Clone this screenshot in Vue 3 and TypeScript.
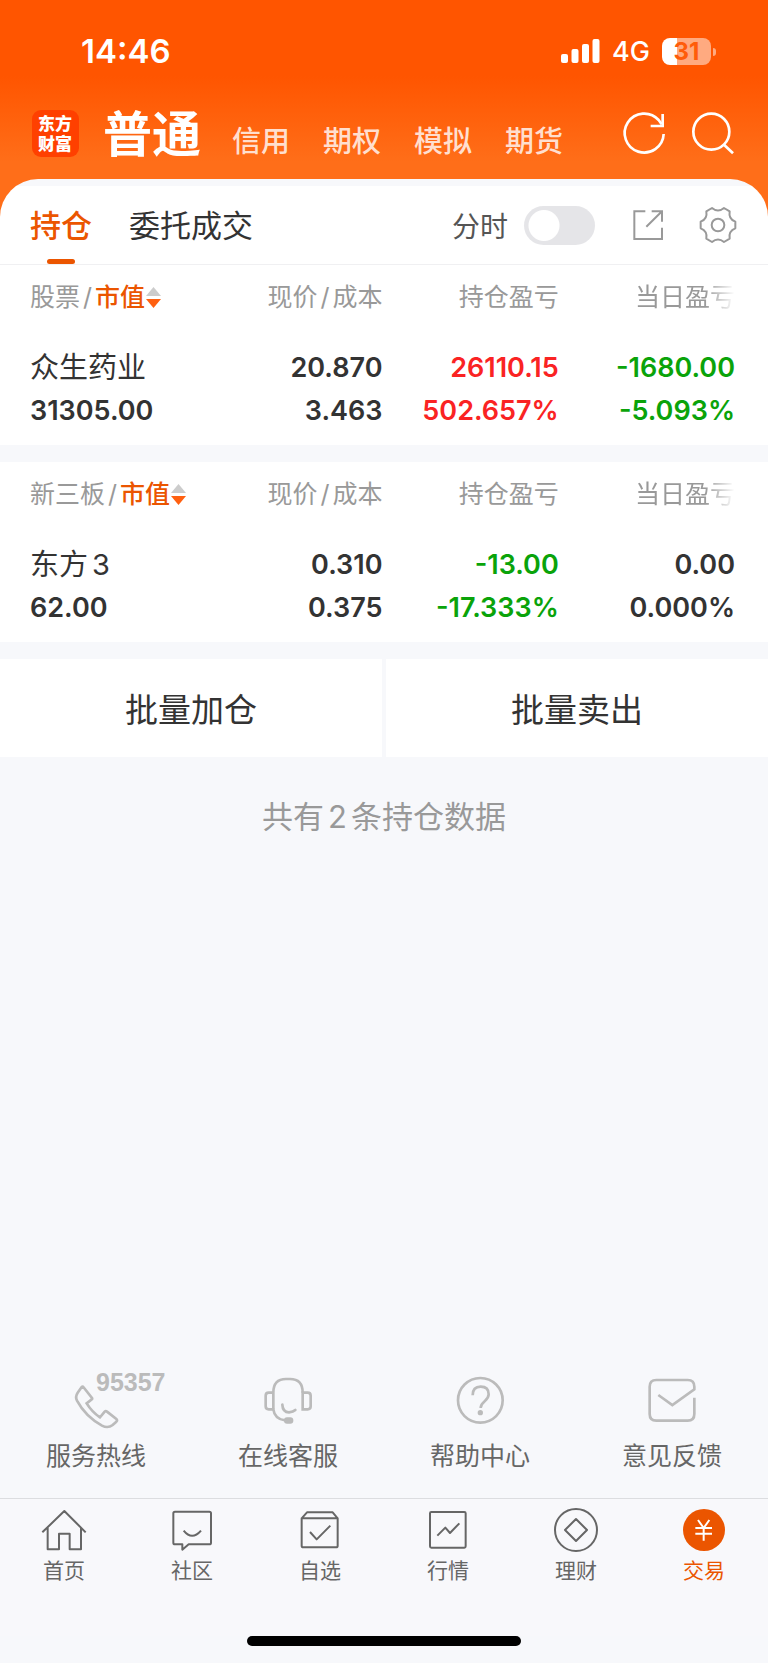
<script setup lang="ts">
import { ref } from 'vue'

type Tone = 'up' | 'down' | 'flat'

interface Cell {
  top: string
  bottom: string
  tone: Tone
}

interface Holding {
  name: string
  digit?: string
  value: string
  cells: Cell[]
}

interface Board {
  title: string
  holdings: Holding[]
}

const accounts = ['信用', '期权', '模拟', '期货']
const intraday = ref(false)

const boards: Board[] = [
  {
    title: '股票',
    holdings: [
      {
        name: '众生药业',
        value: '31305.00',
        cells: [
          { top: '20.870', bottom: '3.463', tone: 'flat' },
          { top: '26110.15', bottom: '502.657%', tone: 'up' },
          { top: '-1680.00', bottom: '-5.093%', tone: 'down' },
        ],
      },
    ],
  },
  {
    title: '新三板',
    holdings: [
      {
        name: '东方',
        digit: '3',
        value: '62.00',
        cells: [
          { top: '0.310', bottom: '0.375', tone: 'flat' },
          { top: '-13.00', bottom: '-17.333%', tone: 'down' },
          { top: '0.00', bottom: '0.000%', tone: 'flat' },
        ],
      },
    ],
  },
]
</script>

<template>
  <div class="page">
    <header class="top">
      <div class="status">
        <span class="time">14:46</span>
        <div class="status-right">
          <svg class="signal" viewBox="0 0 39 24" aria-hidden="true">
            <rect x="0" y="15" width="7" height="9" rx="2" />
            <rect x="10.5" y="10" width="7" height="14" rx="2" />
            <rect x="21" y="5" width="7" height="19" rx="2" />
            <rect x="31.5" y="0" width="7" height="24" rx="2" />
          </svg>
          <span class="network">4G</span>
          <div class="battery"><span>31</span></div>
        </div>
      </div>
      <nav class="accounts">
        <a class="logo" href="#home">东方财富</a>
        <a class="account current" href="#normal">普通</a>
        <a v-for="a in accounts" :key="a" class="account" href="#account">{{ a }}</a>
        <button class="icon-button refresh" type="button" aria-label="刷新">
          <svg viewBox="0 0 144 144" stroke-width="8">
            <path d="M131 75A58.500 58.500 0 1 1 116 33L125 46" />
            <path d="M128 15V51H92" />
          </svg>
        </button>
        <button class="icon-button" type="button" aria-label="搜索">
          <svg viewBox="0 0 144 144" stroke-width="8">
            <circle cx="67" cy="68" r="54" />
            <path d="M105 107L132 133" />
          </svg>
        </button>
      </nav>
    </header>

    <main class="sheet">
      <div class="toolbar">
        <button class="tab active" type="button">持仓</button>
        <button class="tab" type="button">委托成交</button>
        <label class="intraday">
          <span>分时</span>
          <input v-model="intraday" type="checkbox" role="switch" />
        </label>
        <button class="icon-button tool" type="button" aria-label="分享">
          <svg viewBox="0 0 144 144" stroke-width="6">
            <path d="M64 31H31V114H114V80M83 31H114V62M114 31L67 77" />
          </svg>
        </button>
        <button class="icon-button tool" type="button" aria-label="设置">
          <svg viewBox="0 0 144 144" stroke-width="6" stroke-linejoin="round">
            <path
              d="M124 62V82Q103 90 107 113L90 123Q72 108 54 123L37 113Q41 90 20 82V62Q41 54 37 31L54 21Q72 36 90 21L107 31Q103 54 124 62Z"
            />
            <circle cx="72" cy="72" r="19" />
          </svg>
        </button>
      </div>

      <section v-for="b in boards" :key="b.title" class="board">
        <table>
          <thead>
            <tr>
              <th scope="col">
                <button class="sort" type="button">
                  {{ b.title }}<i>/</i><b>市值</b>
                  <svg viewBox="0 0 15 21" aria-hidden="true">
                    <path d="M7.500 0L15 9H0Z" fill="#ccc" />
                    <path d="M7.500 21L15 12H0Z" fill="#ff6010" />
                  </svg>
                </button>
              </th>
              <th scope="col">现价<i>/</i>成本</th>
              <th scope="col">持仓盈亏</th>
              <th scope="col"><span class="fade">当日盈亏</span></th>
            </tr>
          </thead>
          <tbody>
            <tr v-for="h in b.holdings" :key="h.name">
              <td>
                <span class="name">{{ h.name }}<em v-if="h.digit">{{ h.digit }}</em></span>
                <span class="num">{{ h.value }}</span>
              </td>
              <td v-for="(c, i) in h.cells" :key="i" :class="c.tone">
                <span class="num">{{ c.top }}</span>
                <span class="num">{{ c.bottom }}</span>
              </td>
            </tr>
          </tbody>
        </table>
      </section>

      <div class="batch">
        <button type="button">批量加仓</button>
        <button type="button">批量卖出</button>
      </div>

      <p class="summary">共有<span>2</span>条持仓数据</p>
    </main>

    <nav class="services">
      <a href="#hotline">
        <span class="service-icon">
          <svg viewBox="0 0 144 144">
            <path
              d="M34 33L60 66Q62 69 58 71L44 82Q60 108 84 124L98 107Q101 104 105 107L133 129Q137 133 133 137L122 147Q108 158 90 149Q40 121 15 74Q9 62 17 50L29 33Q32 30 34 33Z"
            />
          </svg>
          <span class="hotline">95357</span>
        </span>
        服务热线
      </a>
      <a href="#chat">
        <span class="service-icon">
          <svg viewBox="0 0 144 144">
            <path d="M28 50H14Q5 50 5 59V91Q5 100 14 100H28" />
            <path d="M28 100V50Q28 9 66 9H78Q116 9 116 50" />
            <path d="M116 50V100H131Q140 100 140 91V59Q140 50 131 50Z" />
            <path d="M28 100Q32 130 64 133M55 86Q56 109 75 109Q88 108 94 102" stroke-linecap="round" />
            <rect class="solid" x="60" y="124" width="28" height="19" rx="9" />
          </svg>
        </span>
        在线客服
      </a>
      <a href="#help">
        <span class="service-icon">
          <svg viewBox="0 0 144 144">
            <circle cx="73" cy="73" r="67" />
            <path d="M50 58Q50 32 74 32Q98 32 98 55Q98 66 86 76Q74 86 74 96" />
            <circle class="solid" cx="73" cy="110" r="8" />
          </svg>
        </span>
        帮助中心
      </a>
      <a href="#feedback">
        <span class="service-icon">
          <svg viewBox="0 0 144 144">
            <path
              d="M139 65V114Q139 134 119 134H25Q5 134 5 114V32Q5 12 25 12H119Q139 12 139 32V40L73 87L31 57"
            />
          </svg>
        </span>
        意见反馈
      </a>
    </nav>

    <nav class="tabbar">
      <a href="#index">
        <svg viewBox="0 0 144 144"><path d="M7 79L73 15L137 79M23 65V130H57V83H89V130H123V65" /></svg>
        首页
      </a>
      <a href="#community">
        <svg viewBox="0 0 144 144">
          <path
            d="M21 17H124Q129 17 129 22V110Q129 115 124 115H62L43 131V115H21Q16 115 16 110V22Q16 17 21 17Z"
          />
          <path d="M47 74Q72 105 99 74" />
        </svg>
        社区
      </a>
      <a href="#watchlist">
        <svg viewBox="0 0 144 144">
          <path d="M17 37H125V119Q125 124 120 124H22Q17 124 17 119ZL33 19H110L125 37M42 78L62 100L103 59" />
        </svg>
        自选
      </a>
      <a href="#market">
        <svg viewBox="0 0 144 144">
          <rect x="18" y="18" width="107" height="107" rx="4" />
          <path d="M40 89L64 65L78 81L106 52" />
        </svg>
        行情
      </a>
      <a href="#wealth">
        <svg viewBox="0 0 144 144">
          <circle cx="72" cy="72" r="63" />
          <path d="M72 39L105 72L72 105L39 72Z" />
        </svg>
        理财
      </a>
      <a class="selected" href="#trade" aria-current="page">
        <svg viewBox="0 0 144 144">
          <circle class="disc" cx="72" cy="72" r="63" />
          <path class="yen" d="M54 42L71 66L88 42M71 66V104M46 66H96M46 83H96" />
        </svg>
        交易
      </a>
    </nav>
    <div class="home-indicator"></div>
  </div>
</template>

<style>
body {
  background: #f7f8fb;
}
</style>

<style scoped>
.page {
  display: flex;
  flex-direction: column;
  min-height: 100vh;
  background: #f7f8fb;
  color: #333;
  font-family: Inter, 'Noto Sans CJK SC', sans-serif;
}
a {
  color: inherit;
  text-decoration: none;
}
button {
  padding: 0;
  border: 0;
  background: none;
  color: inherit;
  font: inherit;
}
svg {
  display: block;
  fill: none;
  stroke: currentColor;
  overflow: visible;
}

.top {
  padding-bottom: 56px;
  background: linear-gradient(#ff5500 0, #ff5500 76px, #ff6e19 162px);
  color: #fff;
}
.status {
  display: flex;
  align-items: center;
  justify-content: space-between;
  height: 102px;
  padding: 0 52px 0 81px;
}
.time {
  font-size: 33px;
  font-weight: 600;
}
.status-right {
  display: flex;
  align-items: center;
}
.signal {
  width: 39px;
  height: 24px;
  margin-right: 12px;
  fill: #fff;
  stroke: none;
}
.network {
  margin-right: 12px;
  font-size: 27px;
  font-weight: 500;
}
.battery {
  position: relative;
  width: 49px;
  height: 27px;
  margin-right: 5px;
  border-radius: 8px;
  background: linear-gradient(90deg, #fff 15px, #ffaa80 15px);
  color: #ff5c0a;
  font-size: 24px;
  font-weight: 700;
  line-height: 27px;
  text-align: center;
}
.battery::after {
  position: absolute;
  top: 10px;
  right: -5px;
  width: 3px;
  height: 8px;
  border-radius: 0 4px 4px 0;
  background: #ffaa80;
  content: '';
}
.accounts {
  display: flex;
  align-items: center;
  height: 62px;
  padding: 0 31px 0 32px;
}
.logo {
  width: 47px;
  height: 47px;
  box-sizing: border-box;
  margin-right: 24px;
  padding: 3px 6px;
  border-radius: 9px;
  background: #ff4000;
  font-family: 'Noto Sans CJK SC', sans-serif;
  font-size: 17px;
  font-weight: 900;
  line-height: 20px;
  word-break: break-all;
}
.account {
  margin-right: 33px;
  padding-top: 18px;
  color: #ffdfcf;
  font-size: 29px;
  font-weight: 500;
  line-height: 40px;
  white-space: nowrap;
}
.account.current {
  margin-right: 31px;
  padding-top: 3px;
  color: #fff;
  font-size: 49px;
  font-weight: 700;
  line-height: 60px;
}
.icon-button svg {
  width: 48px;
  height: 48px;
}
.refresh {
  margin: 0 21px 0 auto;
}

.sheet {
  margin-top: -41px;
  padding-top: 7px;
  border-radius: 38px 38px 0 0;
  background: linear-gradient(#f7f8fb 7px, #fff 7px, #fff 86px, #f7f8fb 86px);
}
.toolbar {
  display: flex;
  align-items: center;
  height: 78px;
  padding: 0 26px 0 30px;
  border-bottom: 1px solid #f0f0f2;
}
.tab {
  position: relative;
  height: 78px;
  margin-right: 37px;
  padding-bottom: 4px;
  font-size: 31px;
  white-space: nowrap;
}
.tab.active {
  color: #eb5500;
  font-weight: 500;
}
.tab.active::after {
  position: absolute;
  bottom: 0;
  left: 50%;
  width: 28px;
  height: 5px;
  margin-left: -14px;
  border-radius: 3px;
  background: #eb5500;
  content: '';
}
.intraday {
  display: flex;
  align-items: center;
  gap: 16px;
  margin-left: auto;
  margin-right: 29px;
  color: #555;
  font-size: 28px;
}
.intraday input {
  width: 71px;
  height: 39px;
  margin: 0;
  border-radius: 20px;
  background: radial-gradient(circle at 20px 50%, #fff 15px, #e5e5e8 16px);
  appearance: none;
}
.intraday input:checked {
  background: radial-gradient(circle at 51px 50%, #fff 15px, #eb5500 16px);
}
.tool {
  color: #999;
}
.tool + .tool {
  margin-left: 22px;
}

.board {
  margin-bottom: 17px;
  padding: 0 33px 13px 30px;
  background: #fff;
}
table {
  width: 100%;
  border-spacing: 0;
  table-layout: fixed;
}
th,
td {
  padding: 0;
  text-align: right;
  white-space: nowrap;
}
th {
  height: 64px;
  padding-bottom: 17px;
  color: #999;
  font-size: 25px;
  font-weight: 400;
  line-height: 64px;
}
th:first-child,
td:first-child {
  text-align: left;
}
th i {
  margin: 0 3px;
  font-style: normal;
}
th b {
  color: #eb5500;
  font-weight: 500;
}
.sort {
  display: flex;
  align-items: center;
}
.sort svg {
  width: 15px;
  height: 21px;
  margin-left: 1px;
  stroke: none;
}
.fade {
  mask-image: linear-gradient(90deg, #000 70%, transparent);
}
.name,
.num {
  display: block;
  line-height: 43px;
}
.name {
  font-size: 29px;
}
.name em {
  margin-left: 4px;
  font-style: normal;
}
.num {
  font-size: 27px;
  font-weight: 600;
}
.up {
  color: #fa2323;
}
.down {
  color: #0aa30a;
}

.batch {
  display: flex;
  gap: 4px;
}
.batch button {
  flex: 1;
  height: 98px;
  background: #fff;
  font-size: 33px;
}
.summary {
  margin: 36px 0;
  color: #999;
  font-size: 31px;
  line-height: 48px;
  text-align: center;
}
.summary span {
  margin: 0 4px;
}

.services {
  display: grid;
  grid-template-columns: repeat(4, 1fr);
  margin-top: auto;
  padding-bottom: 22px;
  color: #666;
  font-size: 25px;
  line-height: 40px;
}
.services a {
  display: flex;
  flex-direction: column;
  align-items: center;
  gap: 12px;
}
.service-icon {
  position: relative;
  color: #bbb;
}
.service-icon svg {
  width: 48px;
  height: 48px;
  stroke-width: 8;
}
.service-icon .solid {
  fill: #bbb;
  stroke: none;
}
.hotline {
  position: absolute;
  top: -8px;
  left: 24px;
  font-family: 'Liberation Sans', Arial, sans-serif;
  font-size: 25px;
  font-weight: 700;
  line-height: 28px;
}
.tabbar {
  display: grid;
  grid-template-columns: repeat(6, 1fr);
  height: 137px;
  border-top: 1px solid #dcdde0;
  background: #f8f8fb;
  color: #666;
  font-size: 21px;
  line-height: 30px;
}
.tabbar a {
  display: flex;
  flex-direction: column;
  align-items: center;
  gap: 2px;
  padding-top: 7px;
}
.tabbar svg {
  width: 48px;
  height: 48px;
  stroke-width: 6;
  stroke-linejoin: round;
}
.tabbar .selected {
  color: #eb5500;
}
.tabbar .disc {
  fill: #eb5500;
  stroke: none;
}
.tabbar .yen {
  stroke: #fff;
}
.home-indicator {
  align-self: center;
  width: 274px;
  height: 10px;
  margin-bottom: 17px;
  border-radius: 5px;
  background: #000;
}
</style>
